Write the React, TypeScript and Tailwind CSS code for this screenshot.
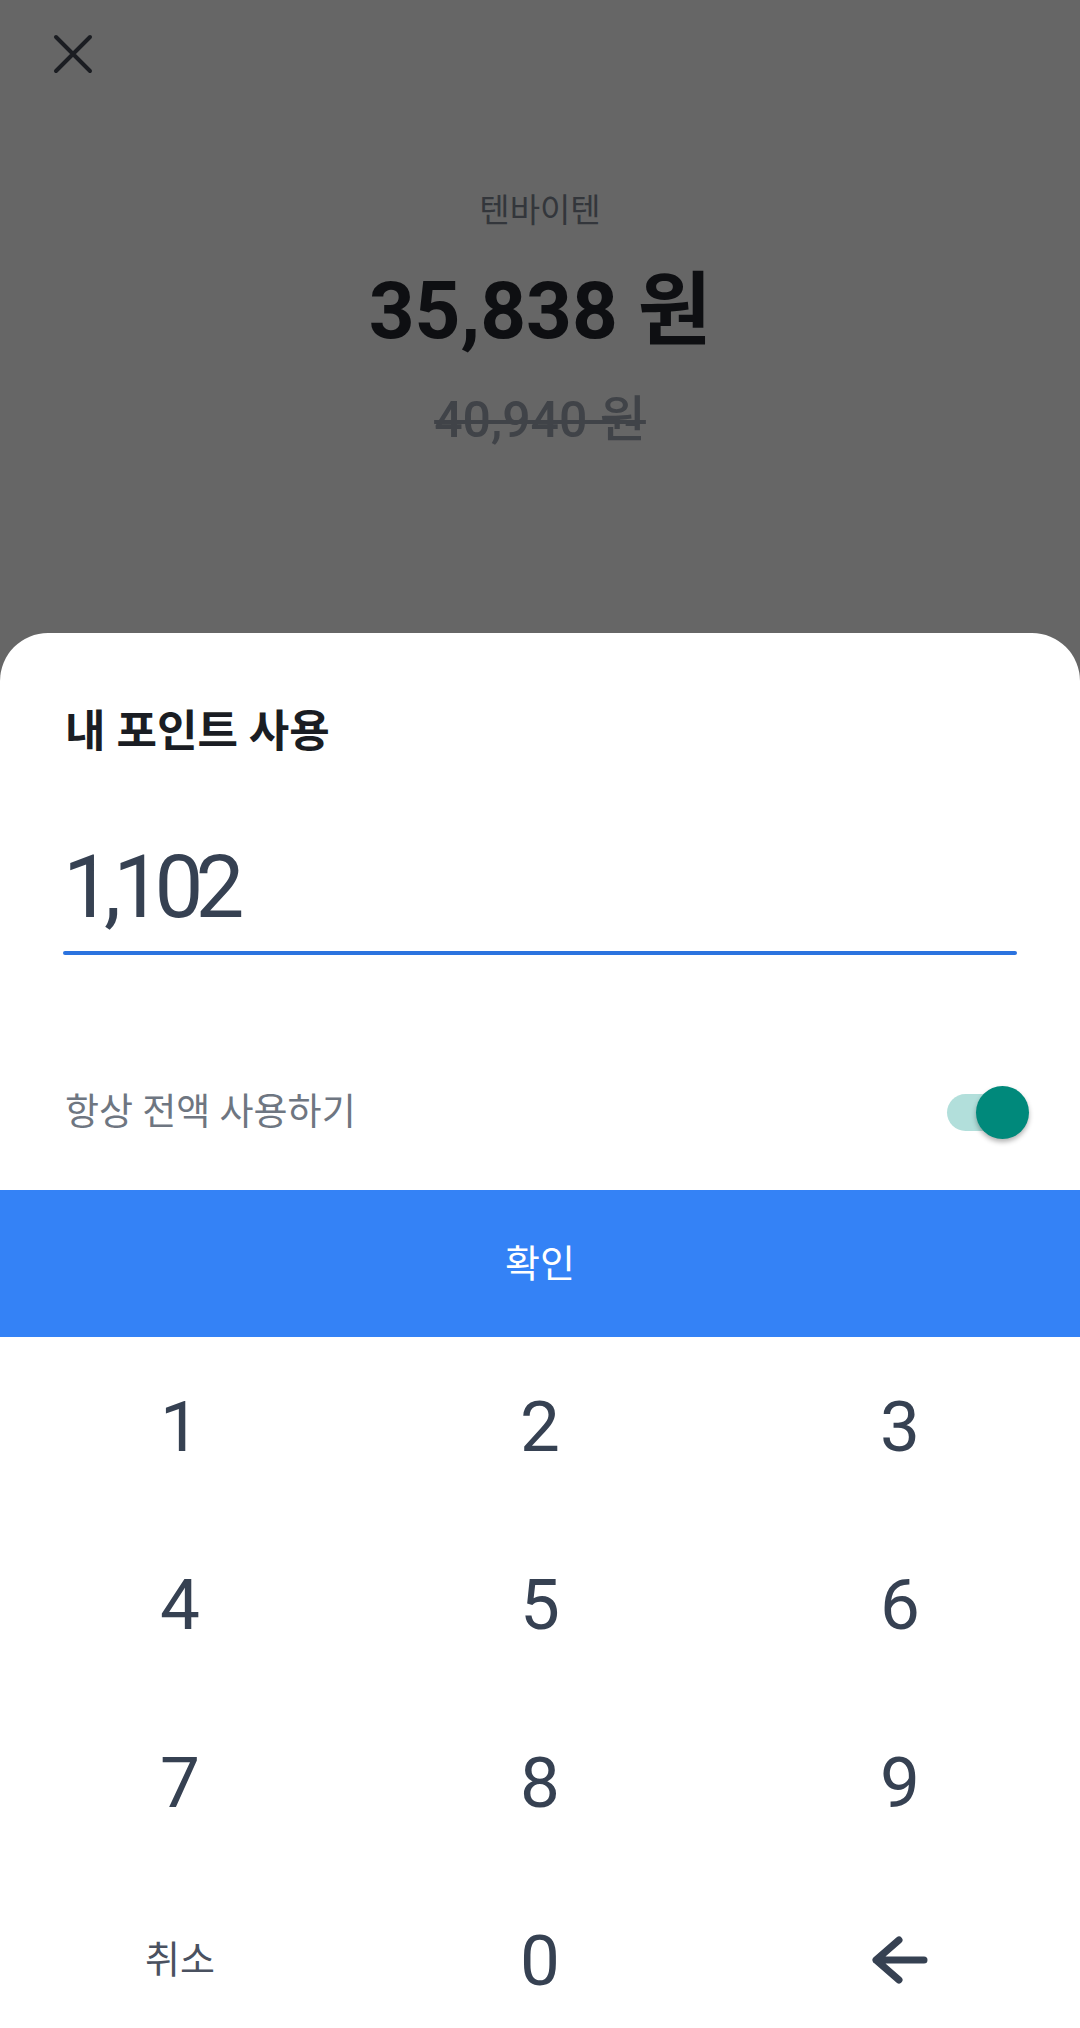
const font = { fontFamily: 'Roboto, "Noto Sans CJK KR", sans-serif' };

function CloseIcon() {
  return (
    <svg width="40" height="40" viewBox="0 0 40 40" fill="none" stroke="#1b1d22" strokeWidth="4" strokeLinecap="round">
      <path d="M3 3 37 37M37 3 3 37" />
    </svg>
  );
}

function BackIcon() {
  return (
    <svg width="62" height="52" viewBox="0 0 62 52" fill="none" stroke="#364152" strokeWidth="7" strokeLinecap="round" strokeLinejoin="round">
      <path d="M7 26H55M30 6 7 26l23 20" />
    </svg>
  );
}

function Toggle() {
  return (
    <div className="relative h-[53px] w-[82px]">
      <div className="absolute left-0 top-[8px] h-[37px] w-[70px] rounded-full bg-[#b2dfdb]" />
      <div className="absolute right-0 top-0 h-[53px] w-[53px] rounded-full bg-[#00897b] shadow-[0_3px_5px_rgba(0,0,0,0.3)]" />
    </div>
  );
}

const keys = ["1", "2", "3", "4", "5", "6", "7", "8", "9"];

export default function App() {
  return (
    <div className="flex h-[2028px] flex-col overflow-hidden bg-[#666666]" style={font}>
      <div className="flex h-[633px] shrink-0 flex-col">
        <div className="ml-[53px] mt-[34px]">
          <CloseIcon />
        </div>
        <div className="mt-[120px] flex flex-col items-center">
          <p className="text-[33px] leading-none text-[#33363b]">텐바이텐</p>
          <p className="mt-[44px] text-[80px] font-bold leading-none text-[#0e0f12]">35,838 원</p>
          <p className="mt-[44px] text-[50px] font-medium leading-none text-[#404348] line-through decoration-[4px]">40,940 원</p>
        </div>
      </div>

      <div className="flex flex-1 flex-col rounded-t-[48px] bg-white">
        <div className="px-[63px] pt-[77px]">
          <h2 className="pl-[2px] text-[44px] font-bold leading-none text-[#1a1d23]">내 포인트 사용</h2>
          <p className="mt-[90px] text-[87px] leading-none tracking-[-0.09em] text-[#364152]">1,102</p>
          <div className="mt-[20px] h-[4px] rounded-full bg-[#2b73df]" />
          <div className="-mr-[12px] mt-[127px] flex h-[60px] items-center justify-between">
            <span className="pl-[2px] text-[37px] leading-none text-[#6e7681]">항상 전액 사용하기</span>
            <Toggle />
          </div>
        </div>

        <button className="mt-[48px] flex h-[147px] shrink-0 items-center justify-center bg-[#3482f6] text-[38px] leading-none text-white">
          확인
        </button>

        <div className="grid grid-cols-3">
          {keys.map((k) => (
            <div key={k} className="flex h-[178px] items-center justify-center text-[71px] leading-none text-[#364152]">
              {k}
            </div>
          ))}
          <div className="flex h-[178px] items-center justify-center text-[38px] leading-none text-[#4a5160]">취소</div>
          <div className="flex h-[178px] items-center justify-center text-[71px] leading-none text-[#364152]">0</div>
          <div className="flex h-[178px] items-center justify-center">
            <BackIcon />
          </div>
        </div>
      </div>
    </div>
  );
}
